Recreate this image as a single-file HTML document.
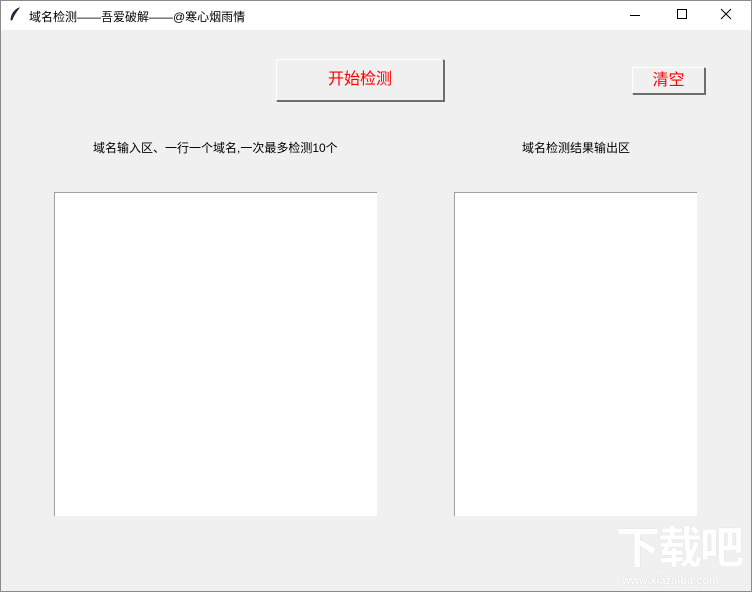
<!DOCTYPE html>
<html><head><meta charset="utf-8"><style>
*{margin:0;padding:0;box-sizing:border-box}
body{width:752px;height:592px;background:#f0f0f0;position:relative;overflow:hidden;font-family:"Liberation Sans","Noto Sans CJK SC",sans-serif}
.frame{position:absolute;left:0;top:0;width:752px;height:592px;border:1px solid #8a8a8a;pointer-events:none}
.title{position:absolute;left:0;top:0;width:752px;height:30px;background:#fff;font-size:12px;color:#000}
.title .t{position:absolute;left:29px;top:8px}
.ab{position:absolute;font-size:12px;color:#000}
.btn{position:absolute;background:#f0f0f0;border:1px solid;border-color:#fff #6d6d6d #6d6d6d #fff;box-shadow:1px 1px 0 #6d6d6d;color:#f00;text-align:center}
.box{position:absolute;background:#fff;border-top:1px solid #a0a0a0;border-left:1px solid #a0a0a0}
.wm{position:absolute;color:#fff;font-weight:bold}
</style></head><body>
<div class="title">
<svg style="position:absolute;left:9px;top:7px" width="12" height="15" viewBox="0 0 12 15"><path d="M10 1 C5 3 2 8 2 13 L3 13 C4 9 7 5 10 1Z" fill="#234" stroke="#123" stroke-width="0.8"/></svg>
<span class="t">域名检测——吾爱破解——@寒心烟雨情</span>
<svg style="position:absolute;left:629px;top:9px" width="12" height="12"><path d="M1 6.5H11" stroke="#000"/></svg>
<svg style="position:absolute;left:676px;top:8px" width="12" height="12"><rect x="1.5" y="1.5" width="9" height="9" fill="none" stroke="#000"/></svg>
<svg style="position:absolute;left:720px;top:8px" width="12" height="12"><path d="M1 1L11 11M11 1L1 11" stroke="#000"/></svg>
</div>
<div class="btn" style="left:276px;top:59px;width:168px;height:42px;line-height:40px;font-size:16px">开始检测</div>
<div class="btn" style="left:632px;top:67px;width:73px;height:27px;line-height:25px;font-size:16px">清空</div>
<div class="ab" style="left:93px;top:139px">域名输入区、一行一个域名,一次最多检测10个</div>
<div class="ab" style="left:522px;top:139px">域名检测结果输出区</div>
<div class="box" style="left:54px;top:192px;width:323px;height:324px"></div>
<div class="box" style="left:454px;top:192px;width:243px;height:324px"></div>
<div class="wm" style="left:616px;top:524px;font-size:44px;letter-spacing:-2px;line-height:50px;text-shadow:0 0 1px #ccc">下载吧</div>
<div class="wm" style="left:622px;top:575px;font-size:11px;text-shadow:0 0 1px #bbb">www.xiazaiba.com</div>
<div class="frame"></div>
</body></html>
